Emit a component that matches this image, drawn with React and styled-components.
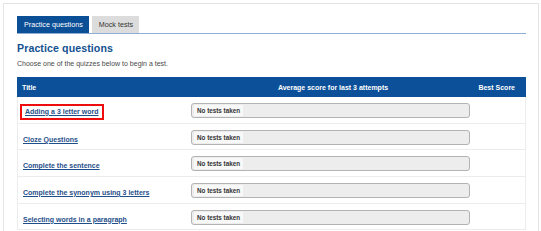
import React from "react";
import styled, { createGlobalStyle } from "styled-components";

const GlobalStyle = createGlobalStyle`
  body {
    margin: 0;
    background: #fff;
    font-family: "Liberation Sans", Arial, sans-serif;
  }
`;

const Frame = styled.div`
  margin: 3px 2px 0 3px;
  padding: 12px 12px 0 13px;
  border: 1px solid #e4e4e4;
  border-bottom: none;
  height: 231px;
  box-sizing: border-box;
  overflow: hidden;
`;

const Tabs = styled.div`
  display: flex;
  gap: 3px;
  border-bottom: 1px solid #8eaed4;
`;

const Tab = styled.div`
  height: 17px;
  padding: 0 6px 0 7px;
  display: flex;
  align-items: center;
  font-size: 7.2px;
  background: ${(p) => (p.active ? "#0b4f96" : "#dcdcdc")};
  color: ${(p) => (p.active ? "#fff" : "#333")};
`;

const Heading = styled.h2`
  margin: 7px 0 0;
  font-size: 10.6px;
  line-height: 14px;
  font-weight: bold;
  color: #14518f;
  letter-spacing: 0.1px;
`;

const Intro = styled.p`
  margin: 4px 0 0;
  font-size: 7px;
  line-height: 10px;
  color: #4a4a4a;
`;

const Table = styled.div`
  margin-top: 8px;
`;

const Grid = styled.div`
  display: grid;
  grid-template-columns: 173px 286px 1fr;
  align-items: center;
`;

const HeaderRow = styled(Grid)`
  height: 20px;
  background: #0b5099;
  color: #fff;
  font-size: 7px;
  font-weight: bold;
`;

const HeadCell = styled.div`
  text-align: ${(p) => p.align || "left"};
  padding: ${(p) => p.pad || "0"};
`;

const Row = styled(Grid)`
  height: 26.7px;
  box-sizing: border-box;
  border: 1px solid #ececec;
  border-top: none;
`;

const TitleCell = styled.div`
  padding-left: ${(p) => (p.boxed ? "2px" : "5px")};
`;

const QuizLink = styled.a`
  display: inline-block;
  font-size: 7px;
  line-height: 10px;
  font-weight: bold;
  color: #1f4f8a;
  text-decoration: underline;
  padding: ${(p) => (p.boxed ? "1px 3px" : "0")};
  border: ${(p) => (p.boxed ? "2px solid #ee0d0d" : "none")};
`;

const Bar = styled.div`
  width: 279px;
  height: 15px;
  box-sizing: border-box;
  margin-top: 1px;
  border: 1px solid #b3b3b3;
  border-radius: 3px;
  background: #ededed;
  display: flex;
  align-items: center;
  padding-left: 2px;
`;

const BarLabel = styled.span`
  background: #f8f8f8;
  padding: 1px 3px;
  font-size: 6.3px;
  font-weight: bold;
  line-height: 9px;
  color: #333;
`;

const quizzes = [
  "Adding a 3 letter word",
  "Cloze Questions",
  "Complete the sentence",
  "Complete the synonym using 3 letters",
  "Selecting words in a paragraph",
];

export default function App() {
  return (
    <>
      <GlobalStyle />
      <Frame>
        <Tabs>
          <Tab active>Practice questions</Tab>
          <Tab>Mock tests</Tab>
        </Tabs>
        <Heading>Practice questions</Heading>
        <Intro>Choose one of the quizzes below to begin a test.</Intro>
        <Table>
          <HeaderRow>
            <HeadCell pad="0 0 0 5px">Title</HeadCell>
            <HeadCell align="center">Average score for last 3 attempts</HeadCell>
            <HeadCell align="right" pad="0 11px 0 0">Best Score</HeadCell>
          </HeaderRow>
          {quizzes.map((q, i) => (
            <Row key={q}>
              <TitleCell boxed={i === 0}>
                <QuizLink href="#" boxed={i === 0}>{q}</QuizLink>
              </TitleCell>
              <Bar>
                <BarLabel>No tests taken</BarLabel>
              </Bar>
              <div />
            </Row>
          ))}
        </Table>
      </Frame>
    </>
  );
}
